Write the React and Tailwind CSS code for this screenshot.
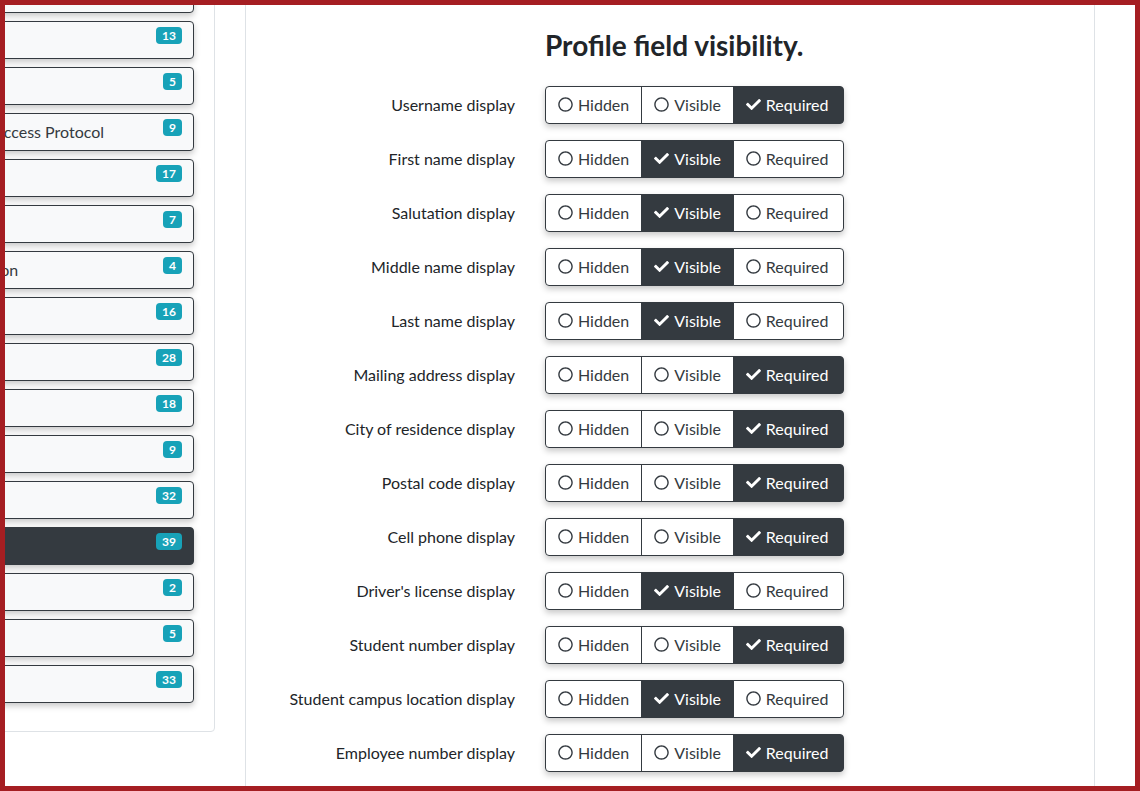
import React from 'react';
import { FaCheck, FaRegCircle } from 'react-icons/fa';

const sections = [
  { name: 'Site information', count: 11 },
  { name: 'Localization', count: 6 },
  { name: 'Appearance', count: 21 },
  { name: 'Email delivery', count: 13 },
  { name: 'Security', count: 5 },
  { name: 'Lightweight Directory Access Protocol', count: 9 },
  { name: 'Registration', count: 17 },
  { name: 'Payments', count: 7 },
  { name: 'Two factor authentication', count: 4 },
  { name: 'Notifications', count: 16 },
  { name: 'Courses', count: 28 },
  { name: 'Enrollment', count: 18 },
  { name: 'Calendar', count: 9 },
  { name: 'User accounts', count: 32 },
  { name: 'Profile fields', count: 39, active: true },
  { name: 'Privacy', count: 2 },
  { name: 'Backups', count: 5 },
  { name: 'Reports', count: 33 },
];

const fields = [
  ['Username display', 'required'],
  ['First name display', 'visible'],
  ['Salutation display', 'visible'],
  ['Middle name display', 'visible'],
  ['Last name display', 'visible'],
  ['Mailing address display', 'required'],
  ['City of residence display', 'required'],
  ['Postal code display', 'required'],
  ['Cell phone display', 'required'],
  ["Driver's license display", 'visible'],
  ['Student number display', 'required'],
  ['Student campus location display', 'visible'],
  ['Employee number display', 'required'],
  ['Employee department display', 'visible'],
];

const options = [
  { value: 'hidden', label: 'Hidden' },
  { value: 'visible', label: 'Visible' },
  { value: 'required', label: 'Required' },
];

function VisibilityToggle({ value }) {
  return (
    <div className="inline-flex rounded shadow-[0_3px_6px_rgba(0,0,0,0.22)]">
      {options.map((opt, i) => {
        const selected = opt.value === value;
        return (
          <button
            key={opt.value}
            className={`flex items-center gap-[5px] h-[38px] pl-3 border border-[#343a40] text-base leading-6 ${
              i === 0 ? 'rounded-l pr-3' : '-ml-px'
            } ${i === 1 ? 'pr-3' : ''} ${i === options.length - 1 ? 'rounded-r pr-[15px]' : ''} ${
              selected ? 'bg-[#343a40] text-white' : 'bg-white text-[#343a40]'
            }`}
          >
            {selected ? <FaCheck className="w-[15px] h-[15px]" /> : <FaRegCircle className="w-[15px] h-[15px]" />}
            {opt.label}
          </button>
        );
      })}
    </div>
  );
}

function App() {
  return (
    <div className="h-[791px] border-[5px] border-[#a51e22] bg-white overflow-hidden flex font-['Lato',sans-serif] text-[#212529]">
      <div className="shrink-0 w-[412px] -ml-[202px] -mt-[143px] self-start">
        <div className="border border-[#dee2e6] rounded p-5 bg-white">
          {sections.map((s) => (
            <div
              key={s.name}
              className={`flex items-start justify-between h-[38px] mb-2 pl-3 pr-[11px] border border-[#343a40] rounded shadow-[0_3px_6px_rgba(0,0,0,0.22)] whitespace-nowrap ${
                s.active ? 'bg-[#343a40] text-white' : 'bg-[#f8f9fa] text-[#343a40]'
              }`}
            >
              <span className="self-center">{s.name}</span>
              <span className="mt-[5px] h-[17px] flex items-center bg-[#17a2b8] text-white text-xs font-bold leading-none px-[6px] rounded">
                {s.count}
              </span>
            </div>
          ))}
        </div>
      </div>

      <div className="shrink-0 w-[850px] ml-[30px] border-x border-[#dee2e6] pt-6">
        <div className="grid grid-cols-[269px_1fr] gap-x-[30px]">
          <div></div>
          <h2 className="text-[28px] font-bold leading-[1.2] mb-[23px]">Profile field visibility.</h2>
        </div>
        <div className="flex flex-col gap-4">
          {fields.map(([label, value]) => (
            <div key={label} className="grid grid-cols-[269px_1fr] gap-x-[30px] items-center">
              <label className="text-right text-base">{label}</label>
              <div>
                <VisibilityToggle value={value} />
              </div>
            </div>
          ))}
        </div>
      </div>
    </div>
  );
}

export default App;
